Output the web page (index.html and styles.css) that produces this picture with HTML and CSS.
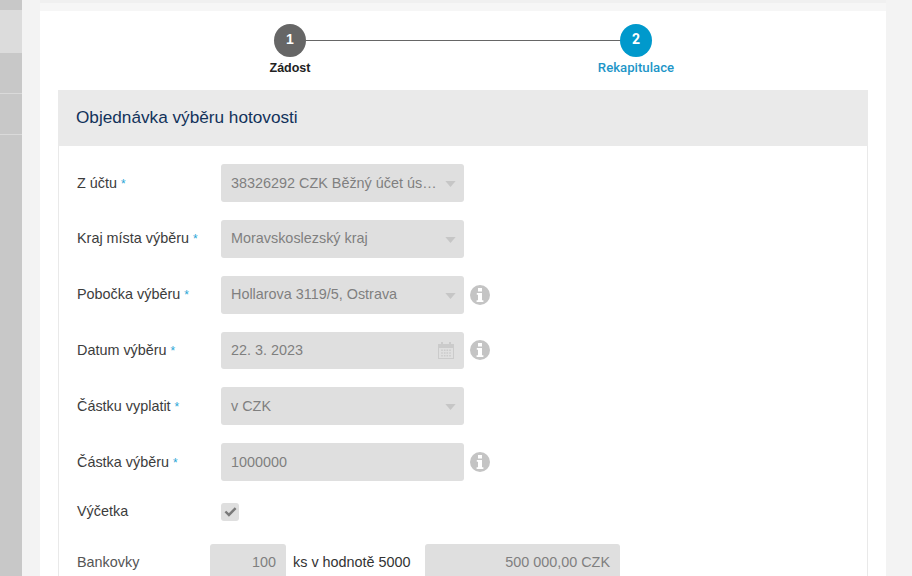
FILE: index.html
```html
<!DOCTYPE html>
<html lang="cs">
<head>
<meta charset="utf-8">
<title>Objednávka výběru hotovosti</title>
<link rel="stylesheet" href="styles.css">
</head>
<body>
<div class="app">
  <aside class="side">
    <div class="side-item h10"></div>
    <div class="side-item active h43"></div>
    <div class="side-item h40"></div>
    <div class="side-item h40"></div>
    <div class="side-item rest"></div>
  </aside>
  <main class="main">
    <div class="topstrip"></div>
    <div class="card">
      <div class="stepper">
        <div class="step done"><span class="dot">1</span><span class="step-label">Zádost</span></div>
        <div class="step-line"></div>
        <div class="step current"><span class="dot">2</span><span class="step-label">Rekapitulace</span></div>
      </div>
      <section class="panel">
        <h1 class="panel-head">Objednávka výběru hotovosti</h1>
        <div class="panel-body">
          <div class="row">
            <label class="lbl">Z účtu <i class="req">*</i></label>
            <div class="field"><span class="val">38326292 CZK Běžný účet ús…</span><svg class="caret" viewBox="0 0 12 7"><path d="M0 0h12L6 7z"/></svg></div>
          </div>
          <div class="row">
            <label class="lbl">Kraj místa výběru <i class="req">*</i></label>
            <div class="field"><span class="val">Moravskoslezský kraj</span><svg class="caret" viewBox="0 0 12 7"><path d="M0 0h12L6 7z"/></svg></div>
          </div>
          <div class="row">
            <label class="lbl">Pobočka výběru <i class="req">*</i></label>
            <div class="field"><span class="val">Hollarova 3119/5, Ostrava</span><svg class="caret" viewBox="0 0 12 7"><path d="M0 0h12L6 7z"/></svg></div>
            <svg class="info" viewBox="0 0 20 20"><circle cx="10" cy="10" r="10"/><path class="info-i" d="M8 3h4v3.400H8zM6.800 8H12v7.200h1.400V17H6.600v-1.800H8V9.800H6.800z"/></svg>
          </div>
          <div class="row">
            <label class="lbl">Datum výběru <i class="req">*</i></label>
            <div class="field"><span class="val">22. 3. 2023</span><svg class="cal" viewBox="0 0 16 17"><path fill-rule="evenodd" d="M3 0h2v2h6V0h2v2h3v15H0V2h3zM1 6v10h14V6zM3.200 7.500h1.600v1.500H3.200zM5.900 7.500h1.600v1.500H5.900zM8.500 7.500h1.600v1.500H8.500zM11.200 7.500h1.600v1.500h-1.600zM3.200 10.200h1.600v1.500H3.200zM5.900 10.200h1.600v1.500H5.900zM8.500 10.200h1.600v1.500H8.500zM11.200 10.200h1.600v1.500h-1.600zM3.200 12.900h1.600v1.500H3.200zM5.900 12.900h1.600v1.500H5.900zM8.500 12.900h1.600v1.500H8.500zM11.200 12.900h1.600v1.500h-1.600z"/></svg></div>
            <svg class="info" viewBox="0 0 20 20"><circle cx="10" cy="10" r="10"/><path class="info-i" d="M8 3h4v3.400H8zM6.800 8H12v7.200h1.400V17H6.600v-1.800H8V9.800H6.800z"/></svg>
          </div>
          <div class="row">
            <label class="lbl">Částku vyplatit <i class="req">*</i></label>
            <div class="field"><span class="val">v CZK</span><svg class="caret" viewBox="0 0 12 7"><path d="M0 0h12L6 7z"/></svg></div>
          </div>
          <div class="row">
            <label class="lbl">Částka výběru <i class="req">*</i></label>
            <div class="field"><span class="val">1000000</span></div>
            <svg class="info" viewBox="0 0 20 20"><circle cx="10" cy="10" r="10"/><path class="info-i" d="M8 3h4v3.400H8zM6.800 8H12v7.200h1.400V17H6.600v-1.800H8V9.800H6.800z"/></svg>
          </div>
          <div class="row row-check">
            <label class="lbl">Výčetka</label>
            <span class="check"><svg viewBox="0 0 14 11"><path d="M1.500 5.500l3.800 3.700L12.500 1.800" /></svg></span>
          </div>
          <div class="row row-notes">
            <label class="lbl lbl-short">Bankovky</label>
            <div class="field field-num"><span class="val">100</span></div>
            <span class="unit">ks v hodnotě 5000</span>
            <div class="field field-sum"><span class="val">500 000,00 CZK</span></div>
          </div>
        </div>
      </section>
    </div>
  </main>
</div>
</body>
</html>
```
FILE: styles.css
```css
* { box-sizing: border-box; }
html, body { margin: 0; height: 100%; overflow: hidden; }
body { background: #f3f3f3; font-family: "Liberation Sans", Arial, sans-serif; font-size: 14.4px; color: #333; }
.app { display: flex; height: 576px; }
.side { width: 22px; flex: none; display: flex; flex-direction: column; background: #c8c8c8; }
.side-item { border-bottom: 1px solid #dadada; }
.h10 { height: 10px; border-bottom: 0; }
.h43 { height: 43px; background: #dcdcdc; border-bottom: 0; }
.h40 { height: 41px; }
.rest { flex: 1; border-bottom: 0; }
.main { flex: 1; padding: 0 26px 0 18px; min-width: 0; }
.topstrip { height: 11px; background: #f6f6f6; border-top: 3px solid #f0f0f0; }
.card { background: #fff; height: 600px; padding: 13px 18px 0; }
.stepper { display: flex; align-items: flex-start; height: 66px; padding-left: 192px; }
.step { width: 80px; display: flex; flex-direction: column; align-items: center; flex: none; }
.dot { width: 32px; height: 33px; border-radius: 50%; color: #fff; font-weight: 700; font-size: 14px; line-height: 31px; text-align: center; }
.step-label { margin-top: 4px; font-size: 12.500px; line-height: 15px; font-weight: 700; white-space: nowrap; color: #222; }
.done .dot { background: #666; }
.current .dot { background: #0099cc; font-family: Roboto, sans-serif; }
.current .step-label { margin-top: 3px; color: #1e96c8; font-family: Roboto, sans-serif; font-weight: 500; font-size: 13.200px; }
.step-line { flex: none; width: 314px; height: 1px; margin: 16px -24px 0; background: #666; }
.panel { width: 810px; border-right: 1px solid #e9e9e9; border-left: 1px solid #e9e9e9; }
.panel-head { margin: 0 -1px; height: 56px; background: #eaeaea; font-size: 17.200px; font-weight: 400; line-height: 55px; padding-left: 18px; color: #12325a; }
.panel-body { padding: 18.200px 0 0 18px; }
.row { display: flex; align-items: center; height: 37.800px; margin-bottom: 18px; }
.lbl { width: 144px; flex: none; color: #3c3c3c; margin-top: -1px; }
.req { font-style: normal; color: #2aa6d6; font-size: 12px; }
.field { position: relative; width: 243px; height: 100%; flex: none; background: #dfdfdf; border-radius: 3px; display: flex; align-items: center; padding: 0 10px 1px; color: #7f7f7f; }
.val { white-space: nowrap; }
.caret { position: absolute; right: 8px; top: 50%; width: 11px; height: 6px; margin-top: -2px; fill: #c6c6c6; }
.cal { position: absolute; right: 10px; top: 10px; width: 16px; height: 17px; fill: #cbcbcb; }
.info { width: 20px; height: 20px; margin-left: 6px; flex: none; fill: #c4c4c4; }
.info-i { fill: #fff; }
.row-check { height: 18px; margin: 22px 0 23px; }
.check { width: 18px; height: 18px; border-radius: 3px; background: #dfdfdf; display: flex; align-items: center; justify-content: center; }
.check svg { width: 13px; height: 11px; fill: none; stroke: #7a7a7a; stroke-width: 2.600; }
.row-notes { height: 38px; }
.lbl-short { width: 133px; color: #555; }
.field-num { width: 76px; justify-content: flex-end; }
.unit { width: 139px; padding-left: 7px; padding-bottom: 1px; flex: none; color: #333; white-space: nowrap; }
.field-sum { width: 195px; justify-content: flex-end; }
```
